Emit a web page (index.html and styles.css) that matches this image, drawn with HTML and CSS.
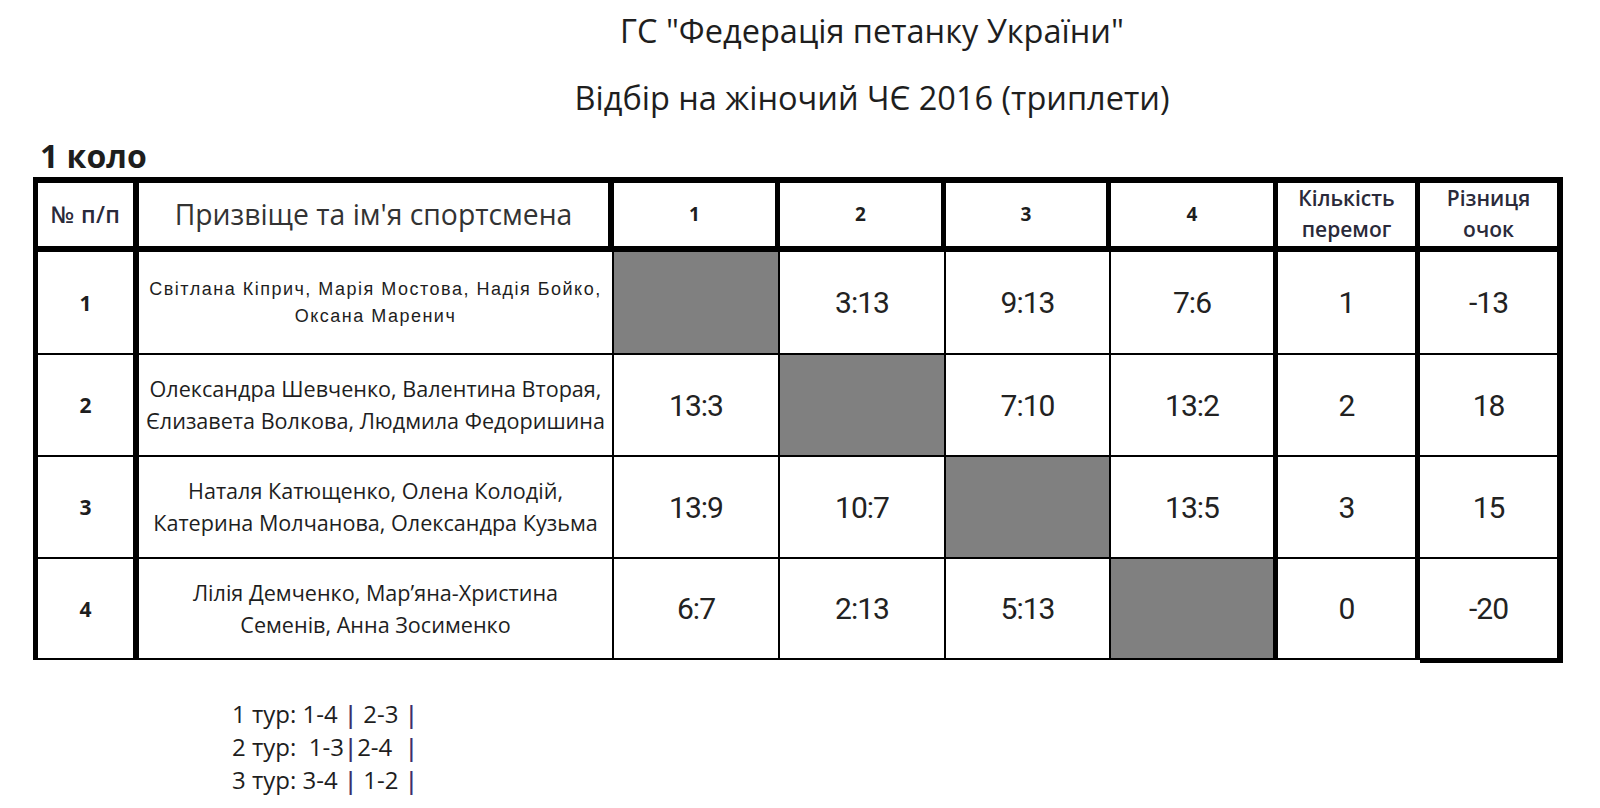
FILE: index.html
```html
<!DOCTYPE html>
<html lang="uk">
<head>
<meta charset="utf-8">
<title>Відбір на жіночий ЧЄ 2016</title>
<link rel="stylesheet" href="styles.css">
</head>
<body>
<div class="page">
  <header class="titles">
    <h1 class="title">ГС "Федерація петанку України"</h1>
    <h2 class="subtitle">Відбір на жіночий ЧЄ 2016 (триплети)</h2>
  </header>
  <h3 class="round">1 коло</h3>
  <div class="grid">
    <div class="cell head head-num">№ п/п</div>
    <div class="cell head head-name">Призвіще та ім'я спортсмена</div>
    <div class="cell head head-col">1</div>
    <div class="cell head head-col">2</div>
    <div class="cell head head-col">3</div>
    <div class="cell head head-col">4</div>
    <div class="cell head head-stat">Кількість<br>перемог</div>
    <div class="cell head head-stat last">Різниця<br>очок</div>

    <div class="cell num">1</div>
    <div class="cell name name-small">Світлана Кіприч, Марія Мостова, Надія Бойко,<br>Оксана Маренич</div>
    <div class="cell score empty"></div>
    <div class="cell score">3:13</div>
    <div class="cell score">9:13</div>
    <div class="cell score sep">7:6</div>
    <div class="cell score sep">1</div>
    <div class="cell score last">-13</div>

    <div class="cell num">2</div>
    <div class="cell name">Олександра Шевченко, Валентина Вторая,<br>Єлизавета Волкова, Людмила Федоришина</div>
    <div class="cell score">13:3</div>
    <div class="cell score empty"></div>
    <div class="cell score">7:10</div>
    <div class="cell score sep">13:2</div>
    <div class="cell score sep">2</div>
    <div class="cell score last">18</div>

    <div class="cell num">3</div>
    <div class="cell name">Наталя Катющенко, Олена Колодій,<br>Катерина Молчанова, Олександра Кузьма</div>
    <div class="cell score">13:9</div>
    <div class="cell score">10:7</div>
    <div class="cell score empty"></div>
    <div class="cell score sep">13:5</div>
    <div class="cell score sep">3</div>
    <div class="cell score last">15</div>

    <div class="cell num">4</div>
    <div class="cell name">Лілія Демченко, Мар’яна-Христина<br>Семенів, Анна Зосименко</div>
    <div class="cell score">6:7</div>
    <div class="cell score">2:13</div>
    <div class="cell score">5:13</div>
    <div class="cell score sep empty"></div>
    <div class="cell score sep">0</div>
    <div class="cell score last final">-20</div>
  </div>
  <div class="schedule">
    <p class="tour">1 тур: 1-4 <span class="bar">|</span> 2-3 <span class="bar">|</span></p>
    <p class="tour">2 тур:&nbsp; 1-3<span class="bar">|</span>2-4 &nbsp;<span class="bar">|</span></p>
    <p class="tour">3 тур: 3-4 <span class="bar">|</span> 1-2 <span class="bar">|</span></p>
  </div>
</div>
</body>
</html>
```

FILE: styles.css
```css
* { box-sizing: border-box; }

html, body {
  margin: 0;
  padding: 0;
  background: #ffffff;
}

body {
  font-family: "Open Sans", "Liberation Sans", sans-serif;
  color: #1e1e1e;
  width: 1600px;
  height: 808px;
  overflow: hidden;
}

.page {
  display: flex;
  flex-direction: column;
}

.titles {
  padding-left: 144px;
  text-align: center;
}

.title {
  margin: 11px 0 0;
  font-size: 32.5px;
  line-height: 40px;
  font-weight: 400;
}

.subtitle {
  margin: 27px 0 0;
  font-size: 32.5px;
  line-height: 40px;
  font-weight: 400;
}

.round {
  margin: 20px 0 0;
  padding-left: 40px;
  font-size: 32px;
  line-height: 36px;
  font-weight: 700;
}

.grid {
  margin: 3px 0 0 33px;
  display: grid;
  grid-template-columns: 101px 475px 166px 166px 165px 167px 142px 143px;
  grid-template-rows: 69px 103px 102px 102px 101px;
  width: max-content;
  border-left: 5px solid #000;
  border-top: 6px solid #000;
}

.cell {
  display: flex;
  align-items: center;
  justify-content: center;
  text-align: center;
  border-right: 2px solid #000;
  border-bottom: 2px solid #000;
  background: #fff;
}

.head {
  border-right-width: 5px;
  border-bottom-width: 6px;
  line-height: 31px;
}

.head-num {
  border-right-width: 6px;
  font-size: 23px;
  font-weight: 600;
  letter-spacing: 0.4px;
  color: #2a2a3a;
}

.head-name {
  border-right-width: 6px;
  font-size: 28.3px;
  color: #333;
}

.head-col {
  font-weight: 700;
  font-size: 19px;
}

.head-stat {
  font-size: 21px;
  font-weight: 600;
  padding-bottom: 2px;
  color: #2a2a3a;
}

.head.last,
.cell.last {
  border-right-width: 6px;
}

.num {
  border-right-width: 6px;
  font-size: 21px;
  font-weight: 700;
}

.name {
  font-size: 21.6px;
  line-height: 32px;
}

.name-small {
  font-family: "Liberation Sans", "Open Sans", sans-serif;
  font-size: 18px;
  letter-spacing: 1.5px;
  line-height: 27px;
}

.score {
  font-family: Roboto, "Open Sans", sans-serif;
  font-size: 30px;
  letter-spacing: -1px;
  color: #222;
}

.sep {
  border-right-width: 5px;
}

.empty {
  background: #808080;
}

.final {
  border-bottom-width: 5px;
  margin-bottom: -3px;
}

.schedule {
  margin-top: 37px;
  padding-left: 232px;
}

.tour {
  margin: 0;
  font-size: 24px;
  line-height: 33px;
  white-space: pre;
  color: #1e1e1e;
}

.bar {
  color: #3d2f6b;
  font-weight: 600;
}
```
